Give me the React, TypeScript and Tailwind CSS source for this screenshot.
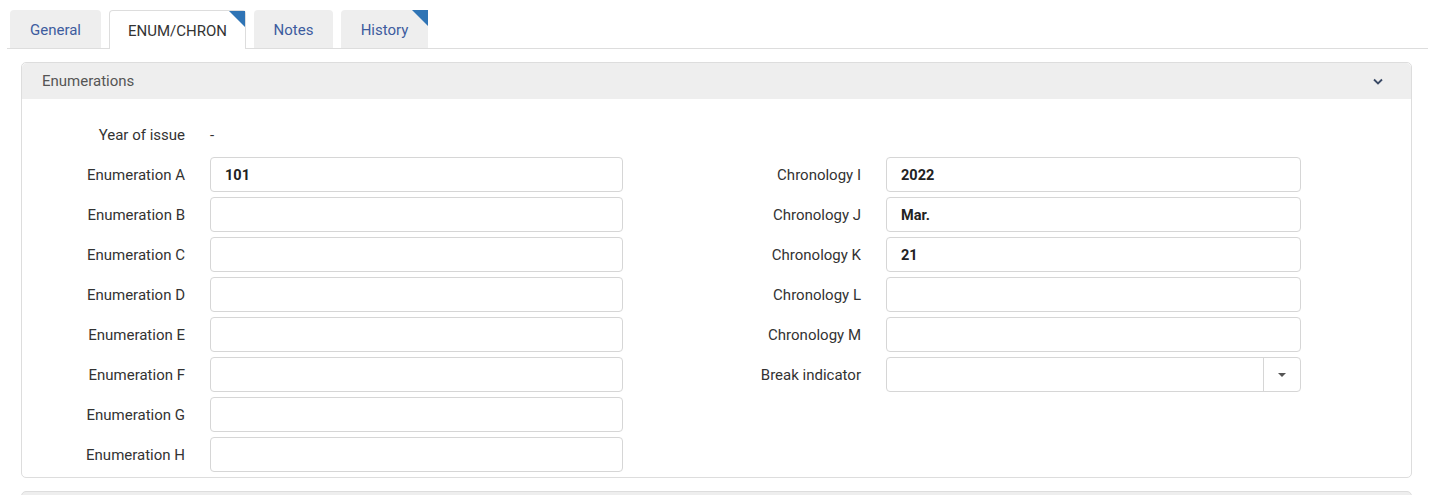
import React from 'react';

const tabs = [
    { label: 'General', w: 'w-[91px]', active: false, flag: false },
    { label: 'ENUM/CHRON', w: 'w-[137px]', active: true, flag: true },
    { label: 'Notes', w: 'w-[79px]', active: false, flag: false },
    { label: 'History', w: 'w-[87px]', active: false, flag: true },
];

const enums = [
    { label: 'Enumeration A', value: '101' },
    { label: 'Enumeration B', value: '' },
    { label: 'Enumeration C', value: '' },
    { label: 'Enumeration D', value: '' },
    { label: 'Enumeration E', value: '' },
    { label: 'Enumeration F', value: '' },
    { label: 'Enumeration G', value: '' },
    { label: 'Enumeration H', value: '' },
];

const chrons = [
    { label: 'Chronology I', value: '2022' },
    { label: 'Chronology J', value: 'Mar.' },
    { label: 'Chronology K', value: '21' },
    { label: 'Chronology L', value: '' },
    { label: 'Chronology M', value: '' },
];

const Field = ({ label, value }: { label: string; value: string }) => (
    <div className="flex items-center h-[35px]">
        <span className="w-[163px] pt-[2px] text-right text-[15px] text-[#333]">{label}</span>
        <div className="ml-[25px] flex-1 h-[35px] border border-[#d6d6d6] rounded-[4px] bg-white flex items-center px-[14px] pt-[2px] text-[14.5px] font-bold text-[#222]">
            {value}
        </div>
    </div>
);

const App = () => {
    return (
        <div className="w-[1430px] h-[495px] bg-white overflow-hidden font-['Roboto',sans-serif]">
            {/* tabs */}
            <div className="pt-[10px] pl-[7px] pr-[2px]">
                <div className="flex items-end gap-[8px] pl-[3px] border-b border-[#dddddd] h-[39px]">
                    {tabs.map((tab) => (
                        <div
                            key={tab.label}
                            className={
                                tab.active
                                    ? `relative ${tab.w} h-[39px] -mb-px pt-[2px] bg-white border border-b-0 border-[#dddddd] rounded-t-[4px] flex items-center justify-center text-[15px] text-[#333]`
                                    : `relative ${tab.w} h-[38px] pt-[2px] bg-[#eeeeee] rounded-t-[4px] flex items-center justify-center text-[15px] text-[#3d5c9e]`
                            }
                        >
                            {tab.label}
                            {tab.flag && (
                                <svg className="absolute top-0 right-0" width="16" height="16" viewBox="0 0 16 16">
                                    <polygon points="0,0 16,0 16,16" fill="#2f74b5" />
                                </svg>
                            )}
                        </div>
                    ))}
                </div>
            </div>

            {/* enumerations panel */}
            <div className="mt-[13px] ml-[21px] mr-[18px] border border-[#dddddd] rounded-[5px]">
                <div className="h-[36px] bg-[#eeeeee] rounded-t-[5px] flex items-center justify-between pl-[20px] pr-[28px]">
                    <span className="text-[15px] text-[#555]">Enumerations</span>
                    <svg width="10" height="7" viewBox="0 0 10 7">
                        <path d="M1 1.5 L5 5.5 L9 1.5" fill="none" stroke="#3a4a66" strokeWidth="1.8" />
                    </svg>
                </div>
                <div className="flex pt-[18px] pb-[5px]">
                    <div className="w-[601px] flex flex-col gap-[5px]">
                        <div className="flex items-center h-[35px]">
                            <span className="w-[163px] pt-[2px] text-right text-[15px] text-[#333]">Year of issue</span>
                            <span className="ml-[25px] pt-[2px] text-[15px] text-[#333]">-</span>
                        </div>
                        {enums.map((f) => (
                            <Field key={f.label} label={f.label} value={f.value} />
                        ))}
                    </div>
                    <div className="ml-[75px] w-[603px] flex flex-col gap-[5px]">
                        <div className="h-[35px]" />
                        {chrons.map((f) => (
                            <Field key={f.label} label={f.label} value={f.value} />
                        ))}
                        <div className="flex items-center h-[35px]">
                            <span className="w-[163px] pt-[2px] text-right text-[15px] text-[#333]">Break indicator</span>
                            <div className="ml-[25px] flex-1 h-[35px] border border-[#d6d6d6] rounded-[4px] bg-white flex">
                                <div className="flex-1" />
                                <div className="w-[37px] border-l border-[#d6d6d6] flex items-center justify-center">
                                    <svg width="8" height="4" viewBox="0 0 8 4">
                                        <polygon points="0,0 8,0 4,4" fill="#555" />
                                    </svg>
                                </div>
                            </div>
                        </div>
                    </div>
                </div>
            </div>

            {/* next panel */}
            <div className="mt-[13px] ml-[21px] mr-[18px] h-[30px] border border-[#dddddd] rounded-t-[5px] bg-[#eeeeee]" />
        </div>
    );
};

export default App;
